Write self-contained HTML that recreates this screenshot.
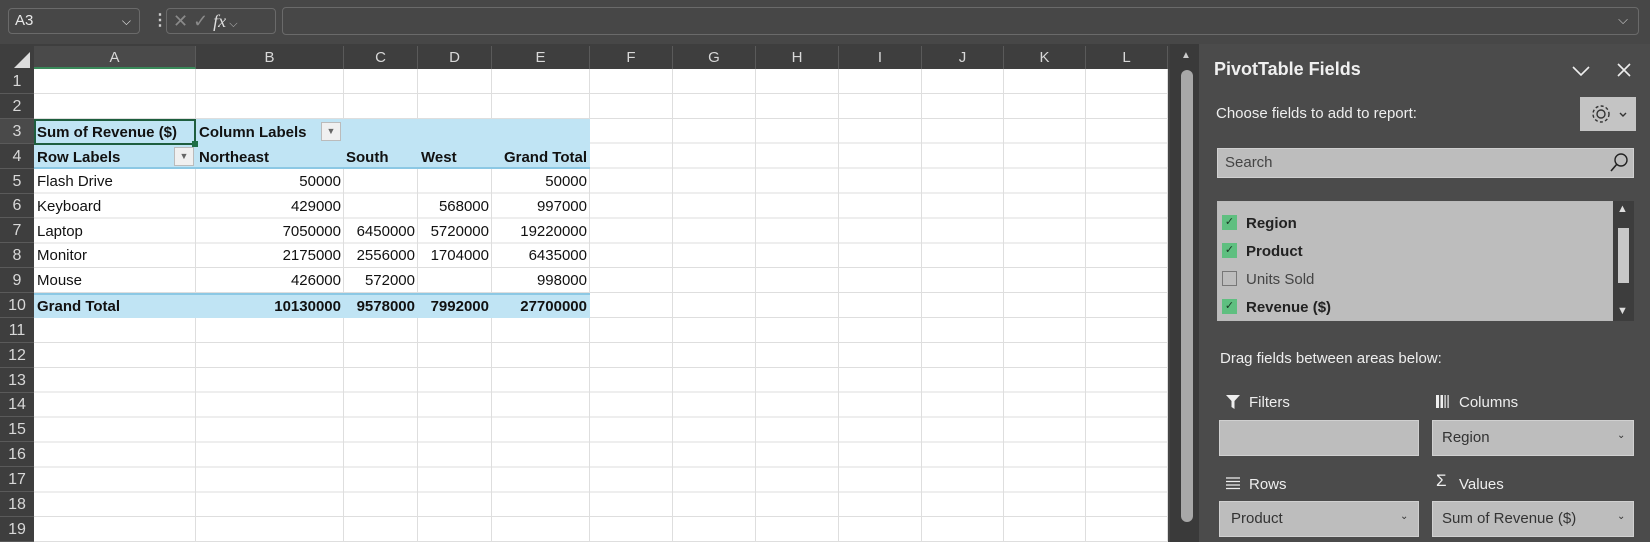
<!DOCTYPE html>
<html><head><meta charset="utf-8"><style>
*{margin:0;padding:0;box-sizing:border-box}
body{width:1650px;height:542px;overflow:hidden;background:#454545;font-family:"Liberation Sans",sans-serif;position:relative}
.a{position:absolute}
.sheet{left:34px;top:69px;width:1134px;height:473px;background:#fff;
background-image:repeating-linear-gradient(to bottom,transparent 0,transparent 23.9px,#dedede 23.9px,#dedede 24.9px)}
.vl{position:absolute;top:46px;width:1px;height:496px;background:#dedede}
.ch{position:absolute;top:46px;height:23px;color:#d8d8d8;font-size:15px;text-align:center;line-height:23px;border-right:1px solid #5a5a5a}
.rh{position:absolute;left:0;width:34px;height:25px;color:#d8d8d8;font-size:16px;text-align:center;line-height:25px;border-bottom:1px solid #5a5a5a}
.c{position:absolute;height:25px;line-height:25px;font-size:15px;color:#111;white-space:nowrap}
.b{font-weight:bold}
.r{text-align:right}
.dd{position:absolute;width:20px;height:19px;background:#f0f0f0;border:1px solid #bbb;font-size:9px;color:#666;text-align:center;line-height:17px}
.pt{color:#eee;font-size:15px}
.box{position:absolute;background:#bdbdbd;border:1px solid #d0d0d0}
.cb{position:absolute;left:1222px;width:15px;height:15px;background:#5fbf80;color:#1a3a25;font-size:11px;line-height:14px;text-align:center}
.fi{position:absolute;left:1246px;font-size:15px;color:#222}
</style></head><body>
<!-- formula bar -->
<div class="a" style="left:0;top:0;width:1650px;height:44px;background:#474747"></div>
<div class="a" style="left:8px;top:8px;width:132px;height:26px;border:1px solid #6a6a6a;border-radius:4px;color:#e8e8e8;font-size:15px;line-height:24px;padding-left:6px">A3<span style="position:absolute;right:8px;top:0;font-size:12px">&#x2335;</span></div>
<div class="a" style="left:152px;top:10px;color:#ccc;font-size:16px;font-weight:bold">&#8942;</div>
<div class="a" style="left:166px;top:8px;width:110px;height:26px;border:1px solid #6a6a6a;border-radius:4px;color:#8a8a8a;font-size:18px;line-height:24px;padding-left:6px">✕ ✓ <i style="font-family:'Liberation Serif',serif;color:#ddd">fx</i><span style="font-size:11px;color:#bbb"> ⌵</span></div>
<div class="a" style="left:282px;top:7px;width:1357px;height:28px;border:1px solid #6a6a6a;border-radius:4px"><span style="position:absolute;right:10px;top:4px;color:#ccc;font-size:13px">⌵</span></div>
<!-- headers -->
<div class="a" style="left:0;top:44px;width:1170px;height:25px;background:#3e3e3e"></div>
<div class="a" style="left:0;top:69px;width:34px;height:473px;background:#3e3e3e"></div>
<svg class="a" style="left:14px;top:52px" width="16" height="16"><polygon points="16,0 16,16 0,16" fill="#ddd"/></svg>
<div class="sheet a"></div>
<div class="vl" style="left:195px"></div><div class="vl" style="left:343px"></div><div class="vl" style="left:417px"></div><div class="vl" style="left:491px"></div><div class="vl" style="left:589px"></div><div class="vl" style="left:672px"></div><div class="vl" style="left:755px"></div><div class="vl" style="left:838px"></div><div class="vl" style="left:921px"></div><div class="vl" style="left:1003px"></div><div class="vl" style="left:1085px"></div><div class="vl" style="left:1167px"></div>
<div class="ch" style="left:34px;width:162px;background:#4a4a4a;border-bottom:2px solid #3a8a5a">A</div>
<div class="ch" style="left:196px;width:148px">B</div><div class="ch" style="left:344px;width:74px">C</div><div class="ch" style="left:418px;width:74px">D</div><div class="ch" style="left:492px;width:98px">E</div><div class="ch" style="left:590px;width:83px">F</div><div class="ch" style="left:673px;width:83px">G</div><div class="ch" style="left:756px;width:83px">H</div><div class="ch" style="left:839px;width:83px">I</div><div class="ch" style="left:922px;width:82px">J</div><div class="ch" style="left:1004px;width:82px">K</div><div class="ch" style="left:1086px;width:82px">L</div>
<div class="rh" style="top:69px">1</div><div class="rh" style="top:94px">2</div><div class="rh" style="top:119px;background:#4a4a4a">3</div><div class="rh" style="top:144px">4</div><div class="rh" style="top:169px">5</div><div class="rh" style="top:193px">6</div><div class="rh" style="top:218px">7</div><div class="rh" style="top:243px">8</div><div class="rh" style="top:268px">9</div><div class="rh" style="top:293px">10</div><div class="rh" style="top:318px">11</div><div class="rh" style="top:343px">12</div><div class="rh" style="top:368px">13</div><div class="rh" style="top:392px">14</div><div class="rh" style="top:417px">15</div><div class="rh" style="top:442px">16</div><div class="rh" style="top:467px">17</div><div class="rh" style="top:492px">18</div><div class="rh" style="top:517px">19</div>
<!-- pivot -->
<div class="a" style="left:34px;top:119px;width:556px;height:50px;background:#c0e4f4;border-bottom:2px solid #8cc8e4"></div>
<div class="a" style="left:34px;top:293px;width:556px;height:25px;background:#c0e4f4;border-top:2px solid #8cc8e4"></div>
<div class="a" style="left:34px;top:119px;width:162px;height:26px;border:2px solid #1e5e3e"></div>
<div class="a" style="left:192px;top:141px;width:6px;height:6px;background:#1e6e46"></div>
<div class="c b" style="left:37px;top:120px">Sum of Revenue ($)</div>
<div class="c b" style="left:199px;top:120px">Column Labels</div><div class="dd" style="left:321px;top:122px">▼</div>
<div class="c b" style="left:37px;top:145px">Row Labels</div><div class="dd" style="left:174px;top:147px">▼</div>
<div class="c b" style="left:199px;top:145px">Northeast</div><div class="c b" style="left:346px;top:145px">South</div><div class="c b" style="left:421px;top:145px">West</div><div class="c b r" style="left:492px;width:95px;top:145px">Grand Total</div>
<div class="c" style="left:37px;top:169px">Flash Drive</div><div class="c r" style="left:196px;width:145px;top:169px">50000</div><div class="c r" style="left:492px;width:95px;top:169px">50000</div>
<div class="c" style="left:37px;top:194px">Keyboard</div><div class="c r" style="left:196px;width:145px;top:194px">429000</div><div class="c r" style="left:418px;width:71px;top:194px">568000</div><div class="c r" style="left:492px;width:95px;top:194px">997000</div>
<div class="c" style="left:37px;top:219px">Laptop</div><div class="c r" style="left:196px;width:145px;top:219px">7050000</div><div class="c r" style="left:344px;width:71px;top:219px">6450000</div><div class="c r" style="left:418px;width:71px;top:219px">5720000</div><div class="c r" style="left:492px;width:95px;top:219px">19220000</div>
<div class="c" style="left:37px;top:243px">Monitor</div><div class="c r" style="left:196px;width:145px;top:243px">2175000</div><div class="c r" style="left:344px;width:71px;top:243px">2556000</div><div class="c r" style="left:418px;width:71px;top:243px">1704000</div><div class="c r" style="left:492px;width:95px;top:243px">6435000</div>
<div class="c" style="left:37px;top:268px">Mouse</div><div class="c r" style="left:196px;width:145px;top:268px">426000</div><div class="c r" style="left:344px;width:71px;top:268px">572000</div><div class="c r" style="left:492px;width:95px;top:268px">998000</div>
<div class="c b" style="left:37px;top:294px">Grand Total</div><div class="c b r" style="left:196px;width:145px;top:294px">10130000</div><div class="c b r" style="left:344px;width:71px;top:294px">9578000</div><div class="c b r" style="left:418px;width:71px;top:294px">7992000</div><div class="c b r" style="left:492px;width:95px;top:294px">27700000</div>
<!-- scrollbar -->
<div class="a" style="left:1170px;top:44px;width:29px;height:498px;background:#3a3a3a"></div>
<div class="a" style="left:1181px;top:70px;width:12px;height:452px;background:#a8a8a8;border-radius:6px"></div>
<div class="a" style="left:1181px;top:50px;color:#ccc;font-size:10px">▲</div>
<!-- panel -->
<div class="a" style="left:1199px;top:44px;width:451px;height:498px;background:#4b4b4b"></div>
<div class="a" style="left:1214px;top:59px;color:#f0f0f0;font-size:18px;font-weight:bold">PivotTable Fields</div>
<svg class="a" style="left:1571px;top:64px" width="20" height="14"><path d="M2 3 L10 11 L18 3" stroke="#eee" stroke-width="1.6" fill="none"/></svg>
<svg class="a" style="left:1616px;top:62px" width="16" height="16"><path d="M2 2 L14 14 M14 2 L2 14" stroke="#eee" stroke-width="1.6"/></svg>
<div class="a pt" style="left:1216px;top:105px">Choose fields to add to report:</div>
<div class="a" style="left:1580px;top:97px;width:56px;height:34px;background:#c4c4c4"></div>
<svg class="a" style="left:1590px;top:103px" width="40" height="22"><circle cx="11" cy="11" r="4" stroke="#333" stroke-width="1.4" fill="none"/><circle cx="11" cy="11" r="8" stroke="#333" stroke-width="1.4" fill="none" stroke-dasharray="3 2.3"/><path d="M30 10 L33 13 L36 10" stroke="#333" stroke-width="1.4" fill="none"/></svg>
<div class="box" style="left:1217px;top:148px;width:417px;height:30px"></div>
<div class="a" style="left:1225px;top:154px;font-size:15px;color:#444">Search</div>
<svg class="a" style="left:1608px;top:151px" width="22" height="24"><circle cx="13" cy="9" r="6" stroke="#222" stroke-width="1.4" fill="none"/><path d="M9 13 L3 20" stroke="#222" stroke-width="1.6"/></svg>
<div class="box" style="left:1217px;top:201px;width:396px;height:120px;border-color:#bbb"></div>
<div class="a" style="left:1613px;top:201px;width:21px;height:120px;background:#3d3d3d"></div>
<div class="a" style="left:1618px;top:228px;width:11px;height:55px;background:#c8c8c8"></div>
<div class="a" style="left:1617px;top:203px;color:#ddd;font-size:11px">▲</div><div class="a" style="left:1617px;top:305px;color:#ddd;font-size:11px">▼</div>
<div class="cb" style="top:215px">✓</div><div class="fi b" style="top:215px">Region</div>
<div class="cb" style="top:243px">✓</div><div class="fi b" style="top:243px">Product</div>
<div class="cb" style="top:271px;background:transparent;border:1px solid #777"></div><div class="fi" style="top:271px;color:#444">Units Sold</div>
<div class="cb" style="top:299px">✓</div><div class="fi b" style="top:299px">Revenue ($)</div>
<div class="a pt" style="left:1220px;top:350px">Drag fields between areas below:</div>
<svg class="a" style="left:1226px;top:395px" width="14" height="14"><path d="M0 0 H14 L8.5 6 V14 L5.5 12 V6 Z" fill="#eee"/></svg>
<div class="a pt" style="left:1249px;top:394px">Filters</div>
<svg class="a" style="left:1436px;top:395px" width="14" height="14"><rect x="0" y="0" width="3" height="13" fill="#eee"/><rect x="4.5" y="0" width="2.5" height="13" fill="#eee"/><rect x="8.5" y="0" width="1.2" height="13" fill="#eee"/><rect x="11.5" y="0" width="1.2" height="13" fill="#eee"/></svg>
<div class="a pt" style="left:1459px;top:394px">Columns</div>
<div class="box" style="left:1219px;top:420px;width:200px;height:36px"></div>
<div class="box" style="left:1432px;top:420px;width:202px;height:36px"></div>
<div class="a" style="left:1442px;top:429px;font-size:15px;color:#333">Region</div><div class="a" style="left:1617px;top:430px;font-size:10px;color:#333">⌄</div>
<svg class="a" style="left:1226px;top:477px" width="15" height="13"><path d="M0 1 H14 M0 4.5 H14 M0 8 H14 M0 11.5 H14" stroke="#eee" stroke-width="1.3"/></svg>
<div class="a pt" style="left:1249px;top:476px">Rows</div>
<div class="a" style="left:1436px;top:471px;color:#eee;font-size:17px">Σ</div>
<div class="a pt" style="left:1459px;top:476px">Values</div>
<div class="box" style="left:1219px;top:501px;width:200px;height:36px"></div>
<div class="box" style="left:1432px;top:501px;width:202px;height:36px"></div>
<div class="a" style="left:1231px;top:510px;font-size:15px;color:#333">Product</div><div class="a" style="left:1400px;top:511px;font-size:10px;color:#333">⌄</div>
<div class="a" style="left:1442px;top:510px;font-size:15px;color:#333">Sum of Revenue ($)</div><div class="a" style="left:1617px;top:511px;font-size:10px;color:#333">⌄</div>
</body></html>
